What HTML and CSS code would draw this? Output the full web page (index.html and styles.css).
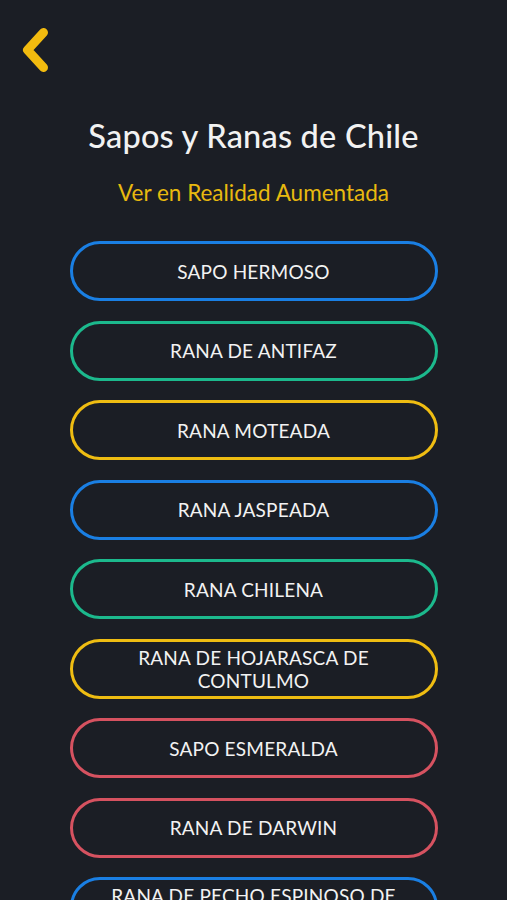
FILE: index.html
```html
<!DOCTYPE html>
<html>

<head>
    <title>Sapos y Ranas de Chile</title>
    <link rel="stylesheet" href="styles.css">
</head>

<body>
    <div class="screen">
        <div class="topbar">
            <a class="back" href="#">
                <svg width="34" height="52" viewBox="0 0 34 52">
                    <polyline points="25.5,8.5 9.5,26 25.5,43.5" fill="none" stroke="#f2bb0f" stroke-width="9" stroke-linecap="round" stroke-linejoin="round" />
                </svg>
            </a>
        </div>
        <h1 class="title">Sapos y Ranas de Chile</h1>
        <a class="ar-link" href="#">Ver en Realidad Aumentada</a>
        <ul class="species">
            <li class="btn blue">SAPO HERMOSO</li>
            <li class="btn green">RANA DE ANTIFAZ</li>
            <li class="btn yellow">RANA MOTEADA</li>
            <li class="btn blue">RANA JASPEADA</li>
            <li class="btn green">RANA CHILENA</li>
            <li class="btn yellow">RANA DE HOJARASCA DE CONTULMO</li>
            <li class="btn red">SAPO ESMERALDA</li>
            <li class="btn red">RANA DE DARWIN</li>
            <li class="btn blue">RANA DE PECHO ESPINOSO DE COLLIGUAY</li>
        </ul>
    </div>
</body>

</html>
```

FILE: styles.css
```css
body {
    margin: 0;
    padding: 0;
    background-color: #1b1e25;
    font-family: Lato, "Open Sans", sans-serif;
    color: #f2f2f2;
    overflow: hidden;
}

.screen {
    display: flex;
    flex-direction: column;
    align-items: center;
    height: 900px;
}

.topbar {
    align-self: stretch;
    height: 96px;
    padding: 24px 0 0 18px;
    box-sizing: border-box;
}

.back {
    display: block;
    width: 34px;
    height: 52px;
}

.title {
    margin: 40px 0 0;
    font-size: 32.5px;
    font-weight: 500;
    line-height: 40px;
    letter-spacing: 0.2px;
}

.ar-link {
    margin-top: 24px;
    font-size: 22.5px;
    line-height: 26px;
    color: #e8b90f;
    text-decoration: none;
}

.species {
    list-style: none;
    margin: 35px 0 0;
    padding: 0;
    display: flex;
    flex-direction: column;
    gap: 19.5px;
}

.btn {
    width: 368px;
    height: 60px;
    box-sizing: border-box;
    border: 3px solid;
    border-radius: 30px;
    display: flex;
    align-items: center;
    justify-content: center;
    text-align: center;
    padding: 0 30px;
    font-size: 19px;
    line-height: 23px;
    letter-spacing: 0.2px;
}

.blue {
    border-color: #1a7fe3;
}

.green {
    border-color: #1cb98d;
}

.yellow {
    border-color: #efbd12;
}

.red {
    border-color: #d65260;
}
```
